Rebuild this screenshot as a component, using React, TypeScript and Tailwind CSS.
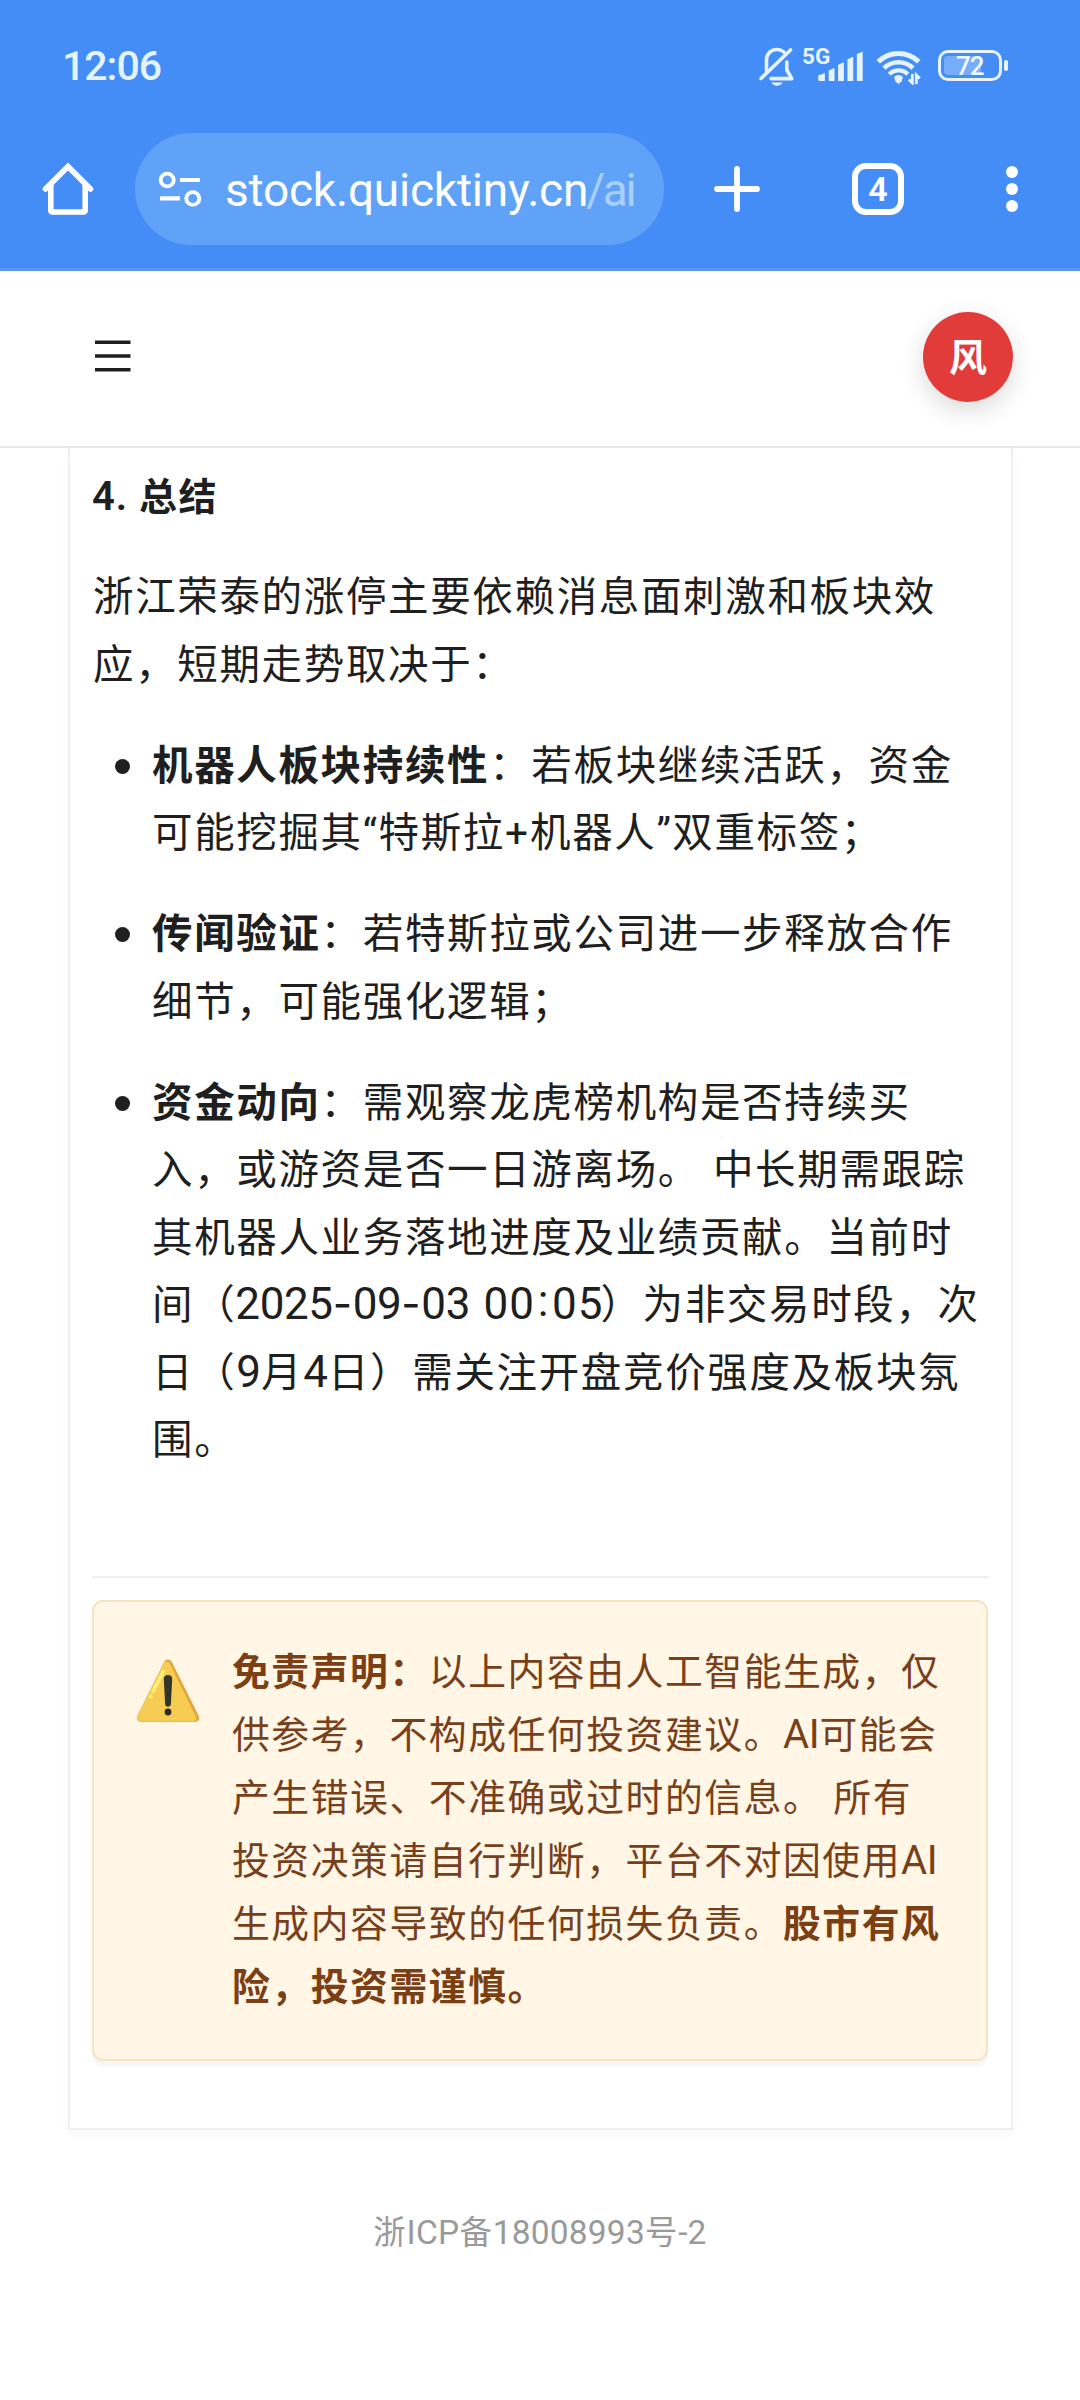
import type { ReactNode } from 'react'

const CJK = "font-['Noto_Sans_CJK_SC',sans-serif]"

function Latin({ children, className = '' }: { children: ReactNode; className?: string }) {
  return <span className={`font-['Roboto',sans-serif] leading-none ${className}`}>{children}</span>
}

function Line({ children }: { children: ReactNode }) {
  return <span className="block whitespace-nowrap">{children}</span>
}

function Bullet({ children }: { children: ReactNode }) {
  return (
    <li className="flex">
      <span className="mt-[30px] mr-[22px] ml-[23px] size-[15px] shrink-0 rounded-full bg-[#1f1f1f]" />
      <div>{children}</div>
    </li>
  )
}

function Dash() {
  return <span className="inline-block w-[20px] font-['Inter',sans-serif] text-[42px] leading-none tracking-normal">-</span>
}

function BellOff() {
  return (
    <svg className="mt-[47px] ml-[600px] h-[40px] w-[36px] shrink-0" viewBox="0 0 36 40" fill="none" stroke="#e6f3ff" strokeWidth="3.6" strokeLinecap="round" strokeLinejoin="round">
      <path d="M7.5 24V13.5C7.5 6.5 12 2.5 18 2.5c3 0 5 .9 6.8 2.5" />
      <path d="M2 31.5 31.500 3" />
      <path d="M27.8 15v8l5 8.6H12" />
      <path d="M12.5 35.5h11c-1.6 4.2-9.4 4.2-11 0z" fill="#e6f3ff" stroke="none" />
    </svg>
  )
}

function Signal() {
  return (
    <div className="relative mt-[47px] ml-[7px] h-[36px] w-[62px] shrink-0">
      <span className="absolute top-0 left-0 font-['Roboto',sans-serif] text-[22.5px] leading-[18px] font-bold text-[#e6f3ff]">5G</span>
      <svg className="absolute inset-0 h-[36px] w-[62px]" viewBox="0 0 61 36" fill="#e6f3ff" preserveAspectRatio="none">
        <path d="M16 28.5 22.5 26v7.6a.5.5 0 0 1-.5.5h-4.500a1.500 1.500 0 0 1-1.500-1.500z" />
        <path d="M26.300 23.500 32 21v12.600a.5.5 0 0 1-.5.500h-4.700a.5.5 0 0 1-.5-.5z" />
        <path d="M35.500 17.800 41.200 15.300v18.300a.5.5 0 0 1-.5.500H36a.5.5 0 0 1-.5-.5z" />
        <path d="M44.700 12.300 50.400 9.800v23.800a.5.5 0 0 1-.5.500h-4.700a.5.5 0 0 1-.5-.5z" />
        <path d="M54 7 59.700 4.500v29.100a.5.5 0 0 1-.5.500h-4.700a.5.5 0 0 1-.5-.5z" />
      </svg>
    </div>
  )
}

function Wifi() {
  return (
    <svg className="mt-[48px] ml-[12px] h-[37px] w-[46px] shrink-0" viewBox="0 0 46 37" fill="none" stroke="#e6f3ff">
      <path d="M2.200 13.800a29 29 0 0 1 40.600 0" strokeWidth="5" />
      <path d="M8 20.200a20.800 20.800 0 0 1 29 0" strokeWidth="4.600" />
      <path d="M13.300 26.200a13.200 13.200 0 0 1 18.500 0" strokeWidth="4.400" />
      <path d="M22.500 27a6.800 6.800 0 0 1 4.500 2l-1.500 4.500-3 2.500-3-2.500-1.500-4.500a6.800 6.800 0 0 1 4.500-2z" fill="#e6f3ff" stroke="none" />
      <path d="M36.300 26v9l-3.500-3.500M40.300 36v-9l3.500 3.500" strokeWidth="2.800" />
    </svg>
  )
}

function Battery() {
  return (
    <div className="mt-[50px] ml-[16px] flex shrink-0 items-center self-start">
      <div className="flex h-[31px] w-[64px] rounded-[10px] border-[3px] border-[#e6f3ff] p-[3px]">
        <div className="relative h-[19px] w-[37px] rounded-l-[4px] bg-[#76adfa]">
          <span className="absolute top-0 left-[12px] font-['Roboto',sans-serif] text-[26px] leading-[21px] font-medium tracking-[-1px] text-[#eef8ff]">72</span>
        </div>
      </div>
      <div className="ml-[2px] h-[11px] w-[4px] rounded-[2px] bg-[#e6f3ff]" />
    </div>
  )
}

function Warning() {
  return (
    <svg className="mt-[22px] ml-[42px] h-[64px] w-[64px] shrink-0" viewBox="0 0 64 64">
      <path d="M28 3.200c2-3.600 6-3.600 8 0l26.400 53c2 4-.2 6.800-4 6.800H5.600c-3.800 0-6-2.800-4-6.800z" fill="#e2a63c" />
      <path d="M27.500 4.500c1.600-2.800 4.600-2.800 6.200 0L59.500 57c1.600 3.300.5 5.500-2.500 5.500H5.300c-3.300 0-5-2.300-3.500-5.500z" fill="#f6cd52" />
      <path d="M27.500 12.500 17 32.500" stroke="#fff07a" strokeWidth="3.400" strokeLinecap="round" />
      <circle cx="14.800" cy="37.500" r="1.900" fill="#fff07a" />
      <path d="M27.800 20c0-2.600 1.600-4 4.200-4s4.200 1.400 4.200 4l-1.300 25c-.2 3.600-5.600 3.600-5.800 0z" fill="#33352b" />
      <circle cx="32" cy="53" r="3.400" fill="#2c2b1d" />
    </svg>
  )
}

function BrowserChrome() {
  return (
    <div className="h-[271px] border-b-[3px] border-[#5b97ea] bg-[#448df7]">
      <div className="flex h-[133px] items-start">
        <span className="mt-[44px] ml-[62px] w-[97px] shrink-0 font-['Roboto',sans-serif] text-[41px] leading-[44px] font-medium tracking-[-1px] whitespace-nowrap text-[#e3f4ff]">12:06</span>
        <BellOff />
        <Signal />
        <Wifi />
        <Battery />
      </div>
      <div className="flex h-[112px] items-center">
        <svg className="ml-[42px] h-[54px] w-[54px] shrink-0" viewBox="0 0 54 54" fill="none" stroke="#fff" strokeWidth="5.600" strokeLinejoin="round" strokeLinecap="round">
          <path d="M3.500 27 26 4.500 48.500 27" strokeLinejoin="miter" />
          <path d="M8.800 23V48.500a1.500 1.500 0 0 0 1.500 1.500h31.400a1.500 1.500 0 0 0 1.500-1.500V23" />
        </svg>
        <div className="ml-[39px] flex h-[112px] w-[529px] shrink-0 items-center rounded-full bg-[#60a2f7]">
          <svg className="ml-[23px] h-[38px] w-[45px] shrink-0" viewBox="0 0 44 38" fill="none" stroke="#fff" preserveAspectRatio="none">
            <circle cx="9" cy="10" r="6.400" strokeWidth="3.800" />
            <path d="M21.500 10H41M2 28.300h19.500" strokeWidth="4.200" />
            <circle cx="34" cy="28.500" r="6.400" strokeWidth="3.800" />
          </svg>
          <span className="mt-[2px] ml-[22px] font-['Roboto',sans-serif] text-[46px] leading-[60px] tracking-[-0.2px] whitespace-nowrap text-white">
            stock.quicktiny.cn<span className="-ml-[2px] tracking-[-2.4px] text-[#a9cffc]">/ai</span>
          </span>
        </div>
        <svg className="ml-[50px] h-[46px] w-[46px] shrink-0" viewBox="0 0 46 46" stroke="#fff" strokeWidth="5.800" strokeLinecap="round">
          <path d="M23 3v40M3 23h40" />
        </svg>
        <div className="ml-[92px] flex size-[52px] shrink-0 items-center justify-center rounded-[14px] border-[6px] border-white font-['Roboto',sans-serif] text-[34px] leading-none font-semibold text-white">4</div>
        <svg className="ml-[101px] h-[48px] w-[14px] shrink-0" viewBox="0 0 14 48" fill="#fff">
          <circle cx="7" cy="7" r="6" />
          <circle cx="7" cy="24" r="6" />
          <circle cx="7" cy="41" r="6" />
        </svg>
      </div>
    </div>
  )
}

export default function App() {
  return (
    <div className={`h-[2400px] w-[1080px] overflow-hidden bg-white text-[#1f1f1f] ${CJK}`}>
      <BrowserChrome />

      <header className="flex h-[177px] items-center justify-between border-b-2 border-[#e8e8ec] bg-white pr-[67px] pb-[3px] pl-[95px]">
        <svg className="mb-[2px] h-[34px] w-[36px]" viewBox="0 0 36 34" stroke="#1f1f1f" strokeWidth="3.400">
          <path d="M0 3.200h35.500M0 17h35.500M0 30.800h35.500" />
        </svg>
        <div className="flex size-[90px] items-center justify-center rounded-full bg-[#e13b3a] pb-[4px] text-[38px] leading-none font-bold text-white shadow-[0_8px_24px_rgba(0,0,0,0.15)]">风</div>
      </header>

      <main className="ml-[68px] h-[1682px] w-[945px] border-2 border-t-0 border-[#f0f0f0] px-[22px] pt-4 shadow-[0_4px_10px_rgba(0,0,0,0.03)]">
        <h3 className="h-[60px] text-[38px] leading-[60px] font-bold tracking-[1.600px] whitespace-nowrap">
          <Latin className="inline-block w-[47px] text-[40px] font-semibold tracking-[1px]">4.</Latin>总结
        </h3>

        <p className="mt-[36px] pl-px text-[40.500px] leading-[67.500px] tracking-[1.650px]">
          <Line>浙江荣泰的涨停主要依赖消息面刺激和板块效</Line>
          <Line>应，短期走势取决于：</Line>
        </p>

        <ul className="mt-[33.500px] flex flex-col gap-[33.500px] text-[40.500px] leading-[67.500px] tracking-[1.650px]">
          <Bullet>
            <Line><b>机器人板块持续性</b>：若板块继续活跃，资金</Line>
            <Line>
              可能挖掘其<Latin className="inline-block w-[15.800px]">“</Latin>特斯拉<Latin className="inline-block w-[25px]">+</Latin>机器人<Latin className="inline-block w-[15.800px]">”</Latin>双重标签；
            </Line>
          </Bullet>
          <Bullet>
            <Line><b>传闻验证</b>：若特斯拉或公司进一步释放合作</Line>
            <Line>细节，可能强化逻辑；</Line>
          </Bullet>
          <Bullet>
            <Line><b>资金动向</b>：需观察龙虎榜机构是否持续买</Line>
            <Line>入，或游资是否一日游离场。<span className="inline-block w-[13px]"> </span>中长期需跟踪</Line>
            <Line>其机器人业务落地进度及业绩贡献。当前时</Line>
            <Line>
              间（<Latin className="-ml-px text-[44px] tracking-[-0.4px]">2025<Dash />09<Dash />03 </Latin>
              <Latin className="-mr-[3px] ml-[3px] text-[44px] tracking-[1px]">00<span className="inline-block w-[17px] -translate-y-[3px] text-center leading-none">:</span>05</Latin>）为非交易时段，次
            </Line>
            <Line>日（<Latin className="text-[44px] tracking-normal">9</Latin>月<Latin className="text-[44px] tracking-normal">4</Latin>日）需关注开盘竞价强度及板块氛</Line>
            <Line>围。</Line>
          </Bullet>
        </ul>

        <hr className="mt-[105.500px] border-t-2 border-[#f0f0f0]" />

        <section className="mt-[22px] flex h-[461px] w-[896px] rounded-[11px] border-2 border-[#f5e5c0] bg-[#fff6e6] pt-[35px] shadow-[0_6px_0_rgba(0,0,0,0.03)]">
          <Warning />
          <p className="ml-[32px] text-[37.800px] leading-[63px] tracking-[1.560px] text-[#78401a]">
            <Line><b className="text-[#7c3f14]">免责声明：</b>以上内容由人工智能生成，仅</Line>
            <Line>供参考，不构成任何投资建议。<Latin className="text-[40px] tracking-[-0.3px]">AI</Latin>可能会</Line>
            <Line>产生错误、不准确或过时的信息。<span className="inline-block w-[11px]"> </span>所有</Line>
            <Line>投资决策请自行判断，平台不对因使用<Latin className="text-[40px] tracking-[-0.3px]">AI</Latin></Line>
            <Line>生成内容导致的任何损失负责。<b className="text-[#7c3f14]">股市有风</b></Line>
            <Line><b className="text-[#7c3f14]">险，投资需谨慎。</b></Line>
          </p>
        </section>
      </main>

      <footer className="mt-[77px] text-center text-[32.400px] leading-[46px] tracking-[0.800px] whitespace-nowrap text-[#999]">
        浙<Latin className="text-[33.500px] tracking-[0.300px]">ICP</Latin>备<Latin className="text-[33.500px] tracking-[0.200px]">18008993</Latin>号<Latin className="text-[33.500px] tracking-[0.200px]">-2</Latin>
      </footer>
    </div>
  )
}
